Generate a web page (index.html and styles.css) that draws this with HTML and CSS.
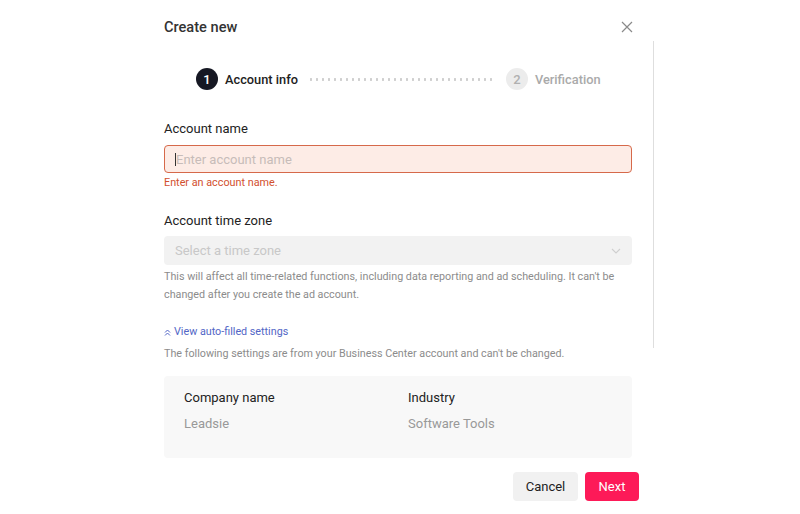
FILE: index.html
```html
<!DOCTYPE html>
<html lang="en">
<head>
<meta charset="utf-8">
<title>Create new</title>
<link rel="stylesheet" href="styles.css">
</head>
<body>
<div class="modal">
  <header class="modal-header">
    <h1 class="title">Create new</h1>
    <button class="close" aria-label="Close">
      <svg width="12" height="12" viewBox="0 0 12 12"><path d="M1 1L11 11M11 1L1 11" stroke="#8a8a8a" stroke-width="1.2" fill="none"/></svg>
    </button>
  </header>
  <div class="modal-body">
    <div class="content">
      <div class="stepper">
        <div class="step active"><span class="num">1</span><span class="step-label">Account info</span></div>
        <div class="dots"></div>
        <div class="step"><span class="num">2</span><span class="step-label">Verification</span></div>
      </div>

      <div class="field field-name">
        <label class="label">Account name</label>
        <div class="input error"><span class="caret"></span><span class="placeholder">Enter account name</span></div>
        <div class="error-text">Enter an account name.</div>
      </div>

      <div class="field field-tz">
        <label class="label">Account time zone</label>
        <div class="select"><span class="placeholder">Select a time zone</span>
          <svg width="10" height="6" viewBox="0 0 10 6"><path d="M1 1L5 5L9 1" stroke="#cfcfcf" stroke-width="1.1" fill="none"/></svg>
        </div>
        <p class="help">This will affect all time-related functions, including data reporting and ad scheduling. It can't be changed after you create the ad account.</p>
      </div>

      <a class="link" href="#"><svg width="7" height="7" viewBox="0 0 7 7"><path d="M1 3.5L3.5 1L6 3.5M1 6.5L3.5 4L6 6.5" stroke="#5266c6" stroke-width="1" fill="none"/></svg>View auto-filled settings</a>
      <p class="note">The following settings are from your Business Center account and can't be changed.</p>

      <div class="card">
        <div class="card-col">
          <div class="card-key">Company name</div>
          <div class="card-val">Leadsie</div>
        </div>
        <div class="card-col">
          <div class="card-key">Industry</div>
          <div class="card-val">Software Tools</div>
        </div>
      </div>
    </div>
    <div class="scrollbar"></div>
  </div>
  <footer class="modal-footer">
    <button class="btn btn-cancel">Cancel</button>
    <button class="btn btn-next">Next</button>
  </footer>
</div>
</body>
</html>
```

FILE: styles.css
```css
* { box-sizing: border-box; }
html, body { margin: 0; padding: 0; background: #fff; }
body {
  font-family: Roboto, "Liberation Sans", Arial, sans-serif;
  color: #222;
  width: 800px;
  height: 514px;
  overflow: hidden;
}
.modal {
  padding-left: 164px;
  width: 660px;
}
.modal-header {
  display: flex;
  justify-content: space-between;
  align-items: center;
  width: 470px;
  height: 41px;
  padding-top: 12px;
}
.title {
  margin: 0;
  font-size: 14.6px;
  line-height: 18px;
  font-weight: 500;
  color: #333;
}
.close {
  border: 0;
  background: none;
  padding: 0;
  width: 12px;
  height: 12px;
  display: flex;
  margin-right: 1px;
}
.modal-body {
  display: flex;
  align-items: flex-start;
}
.content {
  width: 468px;
  display: flex;
  flex-direction: column;
}
.scrollbar {
  width: 1px;
  height: 307px;
  margin-left: 21px;
  background: #dedede;
}
.stepper {
  display: flex;
  align-items: center;
  margin-top: 27px;
  margin-left: 32px;
  height: 22px;
}
.step { display: flex; align-items: center; }
.num {
  width: 22px;
  height: 22px;
  border-radius: 50%;
  display: flex;
  align-items: center;
  justify-content: center;
  font-size: 13px;
  font-weight: 500;
  background: #ececec;
  color: #b0b0b0;
}
.step.active .num { background: #161823; color: #fff; }
.step-label {
  margin-left: 7px;
  font-size: 12.8px;
  font-weight: 500;
  color: #aaa;
}
.step.active .step-label { color: #222; }
.dots {
  width: 186px;
  height: 3px;
  margin: 0 12px 0 10px;
  background-image: radial-gradient(circle, #cfcfcf 1.1px, transparent 1.3px);
  background-size: 6px 3px;
  background-position: 0 0;
}
.field { display: flex; flex-direction: column; }
.field-name { margin-top: 30px; }
.label {
  font-size: 13px;
  line-height: 18px;
  color: #222;
}
.input {
  margin-top: 7px;
  height: 28px;
  border: 1px solid #d6694a;
  background: #fdece6;
  border-radius: 4px;
  display: flex;
  align-items: center;
  padding-left: 10px;
}
.caret {
  width: 1px;
  height: 13px;
  background: #333;
}
.placeholder {
  font-size: 13px;
  color: #c7bcb9;
}
.error-text {
  margin-top: 2px;
  font-size: 10.8px;
  line-height: 16px;
  color: #d2502e;
}
.field-tz { margin-top: 21px; }
.select {
  margin-top: 6px;
  height: 29px;
  background: #f2f2f2;
  border-radius: 4px;
  display: flex;
  align-items: center;
  justify-content: space-between;
  padding: 0 11px 0 11px;
}
.select .placeholder { color: #c8c8c8; }
.help {
  margin: 3px 0 0;
  font-size: 10.75px;
  line-height: 18px;
  color: #8c8c8c;
}
.link {
  margin-top: 20px;
  display: flex;
  align-items: center;
  gap: 3px;
  font-size: 10.75px;
  line-height: 16px;
  color: #5266c6;
  text-decoration: none;
}
.note {
  margin: 6px 0 0;
  font-size: 10.75px;
  line-height: 16px;
  color: #8c8c8c;
}
.card {
  margin-top: 14px;
  background: #f8f8f8;
  border-radius: 4px;
  padding: 13px 20px 25px;
  display: grid;
  grid-template-columns: 224px 1fr;
}
.card-key {
  font-size: 13px;
  line-height: 18px;
  color: #222;
}
.card-val {
  margin-top: 8px;
  font-size: 13px;
  line-height: 18px;
  color: #999;
}
.modal-footer {
  display: flex;
  justify-content: flex-end;
  gap: 7px;
  width: 475px;
  margin-top: 14px;
}
.btn {
  height: 29px;
  border: 0;
  border-radius: 4px;
  font-family: inherit;
  font-size: 13px;
  padding: 0;
}
.btn-cancel { width: 65px; background: #f1f1f1; color: #222; }
.btn-next { width: 54px; background: #fd1a58; color: #fff; }
```
